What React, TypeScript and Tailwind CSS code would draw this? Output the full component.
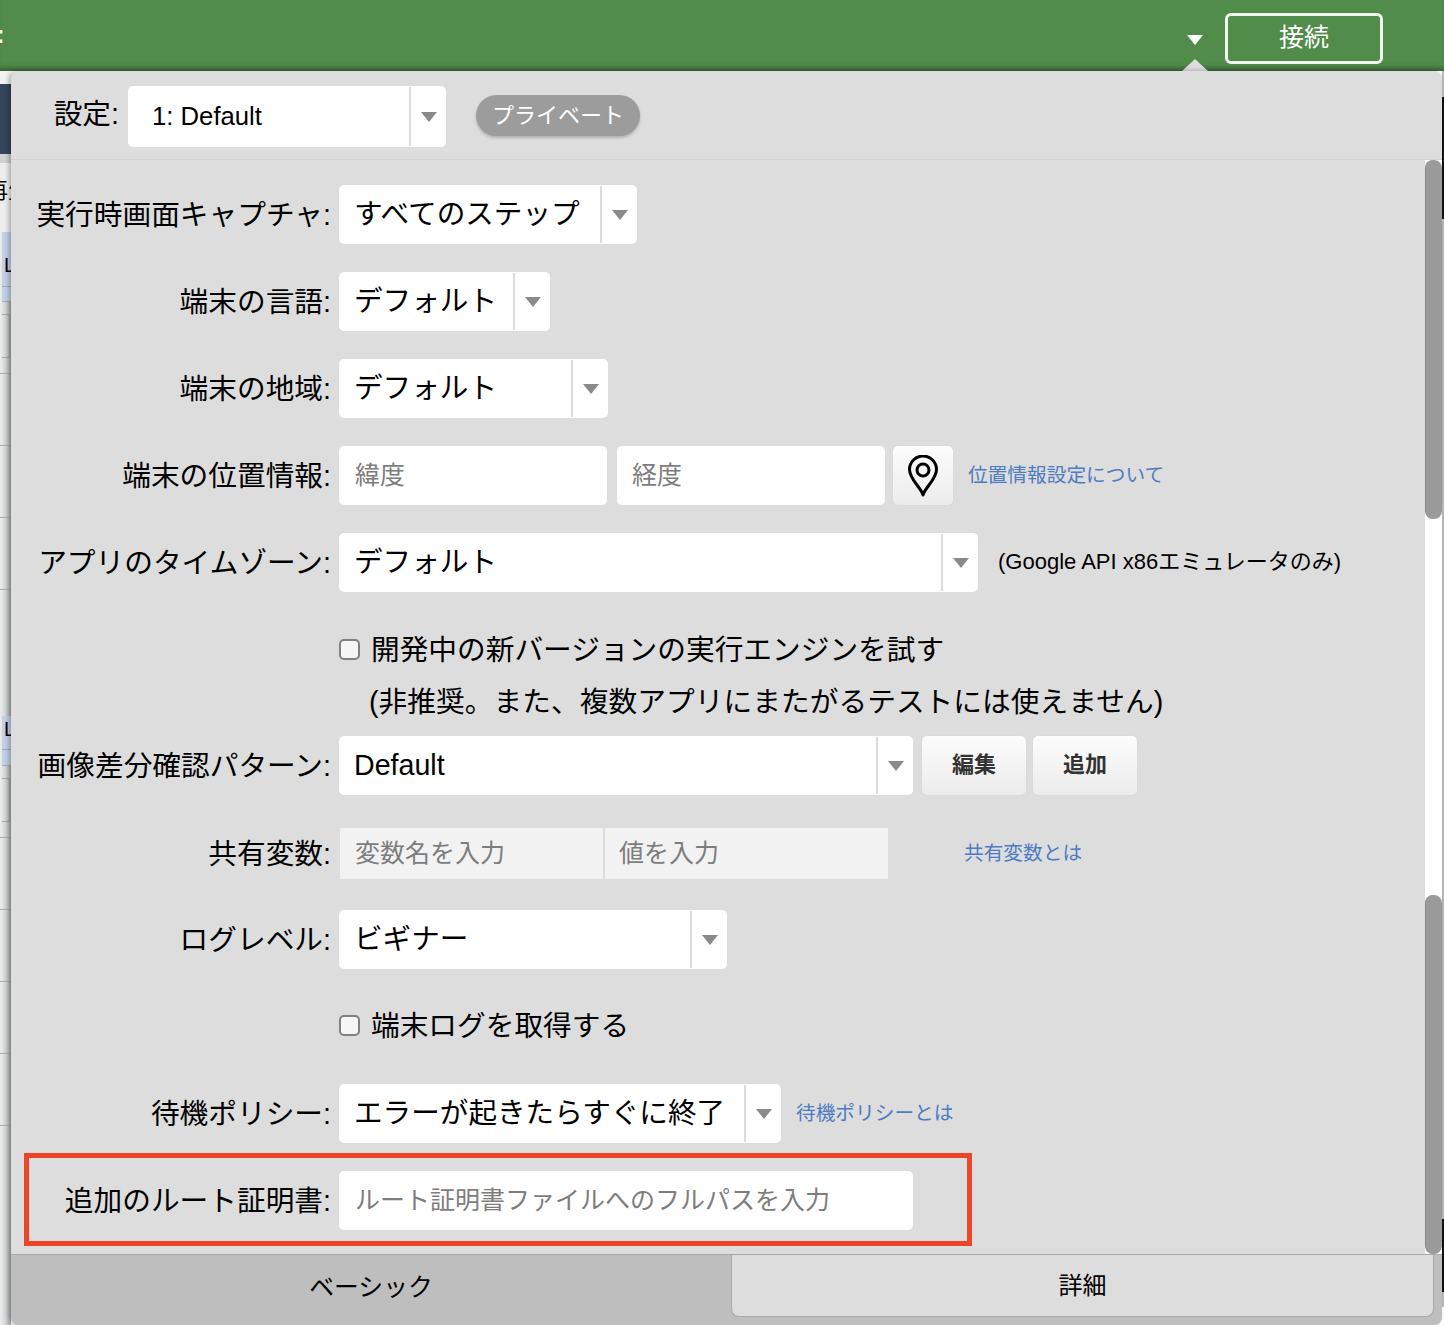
import React from "react";

const FONT = "font-['Liberation_Sans','Noto_Sans_CJK_JP',sans-serif]";

function Arrow({ className }: { className: string }) {
  return (
    <svg width="16" height="10" viewBox="0 0 16 10" className={className}>
      <path d="M0 0H16L8 10Z" fill="currentColor" />
    </svg>
  );
}

function Select({ text, w }: { text: string; w: string }) {
  return (
    <div className={`flex h-[59px] ${w} shrink-0 rounded-[5px] bg-white`}>
      <div className="flex min-w-0 flex-1 items-center whitespace-nowrap pb-[1px] pl-[15px] text-[28.6px] text-black">{text}</div>
      <div className="my-[1px] w-[2px] bg-[#dcdcdc]" />
      <div className="flex w-[35px] items-center justify-center">
        <Arrow className="text-[#8a8a8a]" />
      </div>
    </div>
  );
}

function TextInput({ placeholder, w, cls = "" }: { placeholder: string; w: string; cls?: string }) {
  return (
    <input
      readOnly
      placeholder={placeholder}
      className={`h-[59px] ${w} shrink-0 rounded-[5px] bg-white pb-[1px] pl-[16px] text-[25px] outline-none placeholder:text-[#7d7d7d] ${cls}`}
    />
  );
}

function Row({ label, mt = "mt-[28px]", children }: { label: string; mt?: string; children: React.ReactNode }) {
  return (
    <div className={`flex items-center ${mt}`}>
      <div className="w-[320px] shrink-0 whitespace-nowrap pt-[3px] text-right text-[28.7px] text-black">{label}</div>
      <div className="ml-[8px] flex items-center">{children}</div>
    </div>
  );
}

function Link({ children, cls }: { children: React.ReactNode; cls: string }) {
  return <a className={`whitespace-nowrap text-[19.7px] text-[#4d7cc3] ${cls}`}>{children}</a>;
}

function Check({ label }: { label: string }) {
  return (
    <div className="flex h-[52px] items-center pl-[328px]">
      <span className="mb-[1px] h-[21px] w-[21px] shrink-0 rounded-[5px] border-2 border-[#808080] bg-[#f6f6f6]" />
      <span className="ml-[11px] whitespace-nowrap pt-[2px] text-[28.7px] text-black">{label}</span>
    </div>
  );
}

function GrayButton({ children, cls = "" }: { children: React.ReactNode; cls?: string }) {
  return (
    <button className={`flex h-[59px] shrink-0 items-center justify-center rounded-[5px] bg-gradient-to-b from-[#fcfcfc] to-[#ececec] shadow-[0_0_1px_rgba(0,0,0,0.15)] ${cls}`}>
      {children}
    </button>
  );
}

const line = "border-b border-[#a9a9a9]";
const blue = "ml-[2px] bg-[#c2d0e8] border-b border-[#a9a9a9]";
const box = "ml-[2px] mr-[1px] border-y border-r border-[#a3a3a3]";

const strip: { h: string; cls: string; text?: React.ReactNode }[] = [
  { h: "h-[13px]", cls: "bg-[#f2f2f2]" },
  { h: "h-[70px]", cls: "bg-[#33465c]" },
  { h: "h-[9px]", cls: "bg-[#d0d2d2]" },
  { h: "h-[69px]", cls: "bg-[#eeeeee]", text: <span className="-ml-[14px] -mt-[14px] whitespace-nowrap text-[22px]">再生</span> },
  { h: "h-[55px]", cls: blue, text: <span className="mt-[11px] pl-[2px] text-[20px]">L</span> },
  { h: "h-[15px]", cls: blue },
  { h: "h-[12px]", cls: "" },
  { h: "h-[44px]", cls: box },
  { h: "h-[16px]", cls: line },
  { h: "h-[72px]", cls: line },
  { h: "h-[72px]", cls: line },
  { h: "h-[72px]", cls: line },
  { h: "h-[126px]", cls: "" },
  { h: "h-[34px]", cls: blue, text: <span className="-mt-[8px] pl-[2px] text-[20px]">L</span> },
  { h: "h-[16px]", cls: blue },
  { h: "h-[12px]", cls: "" },
  { h: "h-[44px]", cls: box },
  { h: "h-[16px]", cls: line },
  { h: "h-[72px]", cls: line },
  { h: "h-[72px]", cls: line },
  { h: "h-[72px]", cls: line },
  { h: "h-[72px]", cls: line },
];

export default function App() {
  return (
    <div className={`flex h-[1325px] w-[1444px] flex-col overflow-hidden bg-white ${FONT}`}>
      <header className="relative flex h-[71px] shrink-0 items-center bg-[#518c4a] shadow-[inset_0_-7px_6px_-5px_rgba(0,0,0,0.4)]">
        <span className="-ml-[4px] pb-[2px] text-[26px] font-bold text-white">:</span>
        <Arrow className="ml-auto mr-[22px] mt-[9px] text-white" />
        <button className="mr-[61px] mt-[6px] flex h-[51px] w-[158px] items-center justify-center rounded-[6px] border-[3px] border-[#f2f5f1] pb-[2px] text-[25px] text-white">
          接続
        </button>
        <svg width="26" height="12" viewBox="0 0 26 12" className="absolute left-[1182px] top-[59px]">
          <path d="M13 0L26 12H0Z" fill="#dddddd" />
        </svg>
      </header>

      <div className="flex min-h-0 flex-1">
        <aside className="w-[11px] shrink-0 overflow-hidden bg-gradient-to-r from-[#eceeee] via-[#d3d6d6] to-[#a9acac]">
          {strip.map((s, i) => (
            <div key={i} className={`${s.h} ${s.cls} flex items-center overflow-hidden leading-none text-black`}>
              {s.text}
            </div>
          ))}
        </aside>

        <main className="relative z-10 flex w-[1431px] shrink-0 flex-col overflow-hidden rounded-[8px] bg-[#dddddd] shadow-[-2px_0_5px_rgba(0,0,0,0.3)]">
          <div className="flex h-[89px] shrink-0 items-start border-b border-[#d0d0d0] pt-[15px]">
            <div className="h-[61px] w-[108px] whitespace-nowrap pt-[7px] text-right text-[28.7px] text-black">設定:</div>
            <div className="ml-[9px] flex h-[61px] w-[318px] rounded-[5px] bg-white">
              <div className="flex flex-1 items-center pl-[24px] text-[25.7px] text-black">1: Default</div>
              <div className="my-[1px] w-[2px] bg-[#dcdcdc]" />
              <div className="flex w-[35px] items-center justify-center">
                <Arrow className="text-[#8a8a8a]" />
              </div>
            </div>
            <span className="ml-[30px] mt-[9px] flex h-[41px] w-[164px] items-center justify-center rounded-full bg-[#9c9c9c] text-[22px] text-white shadow-[0_2px_3px_rgba(0,0,0,0.2)]">
              プライベート
            </span>
          </div>

          <div className="flex min-h-0 flex-1">
            <div className="min-w-0 flex-1 pt-[25px]">
              <Row label="実行時画面キャプチャ:" mt="mt-0"><Select text="すべてのステップ" w="w-[298px]" /></Row>
              <Row label="端末の言語:"><Select text="デフォルト" w="w-[211px]" /></Row>
              <Row label="端末の地域:"><Select text="デフォルト" w="w-[269px]" /></Row>
              <Row label="端末の位置情報:">
                <TextInput placeholder="緯度" w="w-[268px]" />
                <TextInput placeholder="経度" w="w-[268px]" cls="ml-[10px] !pl-[15px]" />
                <GrayButton cls="ml-[8px] w-[60px]">
                  <svg width="32" height="42" viewBox="0 0 32 42" fill="none" stroke="black" strokeWidth="3">
                    <path d="M16 40C14.5 33 2.5 24.5 2.5 14.5a13.5 13.5 0 0 1 27 0C29.5 24.5 17.5 33 16 40Z" strokeLinejoin="round" />
                    <circle cx="16" cy="15" r="6" />
                  </svg>
                </GrayButton>
                <Link cls="ml-[15px]">位置情報設定について</Link>
              </Row>
              <Row label="アプリのタイムゾーン:">
                <Select text="デフォルト" w="w-[639px]" />
                <span className="ml-[20px] whitespace-nowrap pb-[2px] text-[22px] text-black">(Google API x86エミュレータのみ)</span>
              </Row>
              <div className="mt-[32px]">
                <Check label="開発中の新バージョンの実行エンジンを試す" />
              </div>
              <div className="flex h-[52px] items-center whitespace-nowrap pl-[358px] pt-[2px] text-[28.7px] tracking-[0.05px] text-black">
                (非推奨。また、複数アプリにまたがるテストには使えません)
              </div>
              <Row label="画像差分確認パターン:" mt="mt-[8px]">
                <Select text="Default" w="w-[574px]" />
                <GrayButton cls="ml-[9px] w-[104px] pb-[3px] text-[22px] font-bold text-[#333333]">編集</GrayButton>
                <GrayButton cls="ml-[7px] w-[104px] pb-[3px] text-[22px] font-bold text-[#333333]">追加</GrayButton>
              </Row>
              <Row label="共有変数:" mt="mt-[33px]">
                <div className="ml-[1px] flex h-[51px] w-[548px] items-center gap-[2px] bg-[#dddddd]">
                  <input readOnly placeholder="変数名を入力" className="h-full w-[263px] bg-[#f2f2f2] pb-[1px] pl-[15px] text-[25px] outline-none placeholder:text-[#7d7d7d]" />
                  <input readOnly placeholder="値を入力" className="h-full w-[283px] bg-[#f2f2f2] pb-[1px] pl-[14px] text-[25px] outline-none placeholder:text-[#7d7d7d]" />
                </div>
                <Link cls="ml-[76px]">共有変数とは</Link>
              </Row>
              <Row label="ログレベル:" mt="mt-[31px]"><Select text="ビギナー" w="w-[388px]" /></Row>
              <div className="mt-[31px]">
                <Check label="端末ログを取得する" />
              </div>
              <Row label="待機ポリシー:" mt="mt-[32px]">
                <Select text="エラーが起きたらすぐに終了" w="w-[442px]" />
                <Link cls="ml-[15px]">待機ポリシーとは</Link>
              </Row>
              <div className="relative">
                <Row label="追加のルート証明書:">
                  <TextInput placeholder="ルート証明書ファイルへのフルパスを入力" w="w-[574px]" />
                </Row>
                <div className="pointer-events-none absolute -top-[18px] left-[13px] h-[93px] w-[948px] border-[5px] border-[#ee4427]" />
              </div>
            </div>

            <div className="flex w-[17px] shrink-0 flex-col bg-white">
              <div className="h-[359px] rounded-[8px] border-l border-[#8a8a8a] bg-[#9a9a9a]" />
              <div className="flex-1" />
              <div className="h-[359px] rounded-[8px] border-l border-[#8a8a8a] bg-[#9a9a9a]" />
            </div>
          </div>

          <footer className="flex h-[71px] shrink-0 items-start border-t border-[#a8a8a8] bg-[#bebebe]">
            <div className="flex h-[62px] w-[720px] items-center justify-center pt-[3px] text-[24.8px] text-black">ベーシック</div>
            <div className="flex h-[62px] w-[703px] items-center justify-center rounded-b-[8px] border-x border-b border-[#a8a8a8] bg-[#dddddd] pt-[1px] text-[24px] text-black">詳細</div>
          </footer>
        </main>

        <aside className="flex w-[2px] shrink-0 flex-col bg-[#bbbbbb]">
          <div className="h-[26px]" />
          <div className="h-[122px] bg-[#111111]" />
          <div className="h-[1000px]" />
          <div className="h-[73px] bg-[#111111]" />
          <div className="h-[15px]" />
          <div className="flex-1 bg-white" />
        </aside>
      </div>
    </div>
  );
}
